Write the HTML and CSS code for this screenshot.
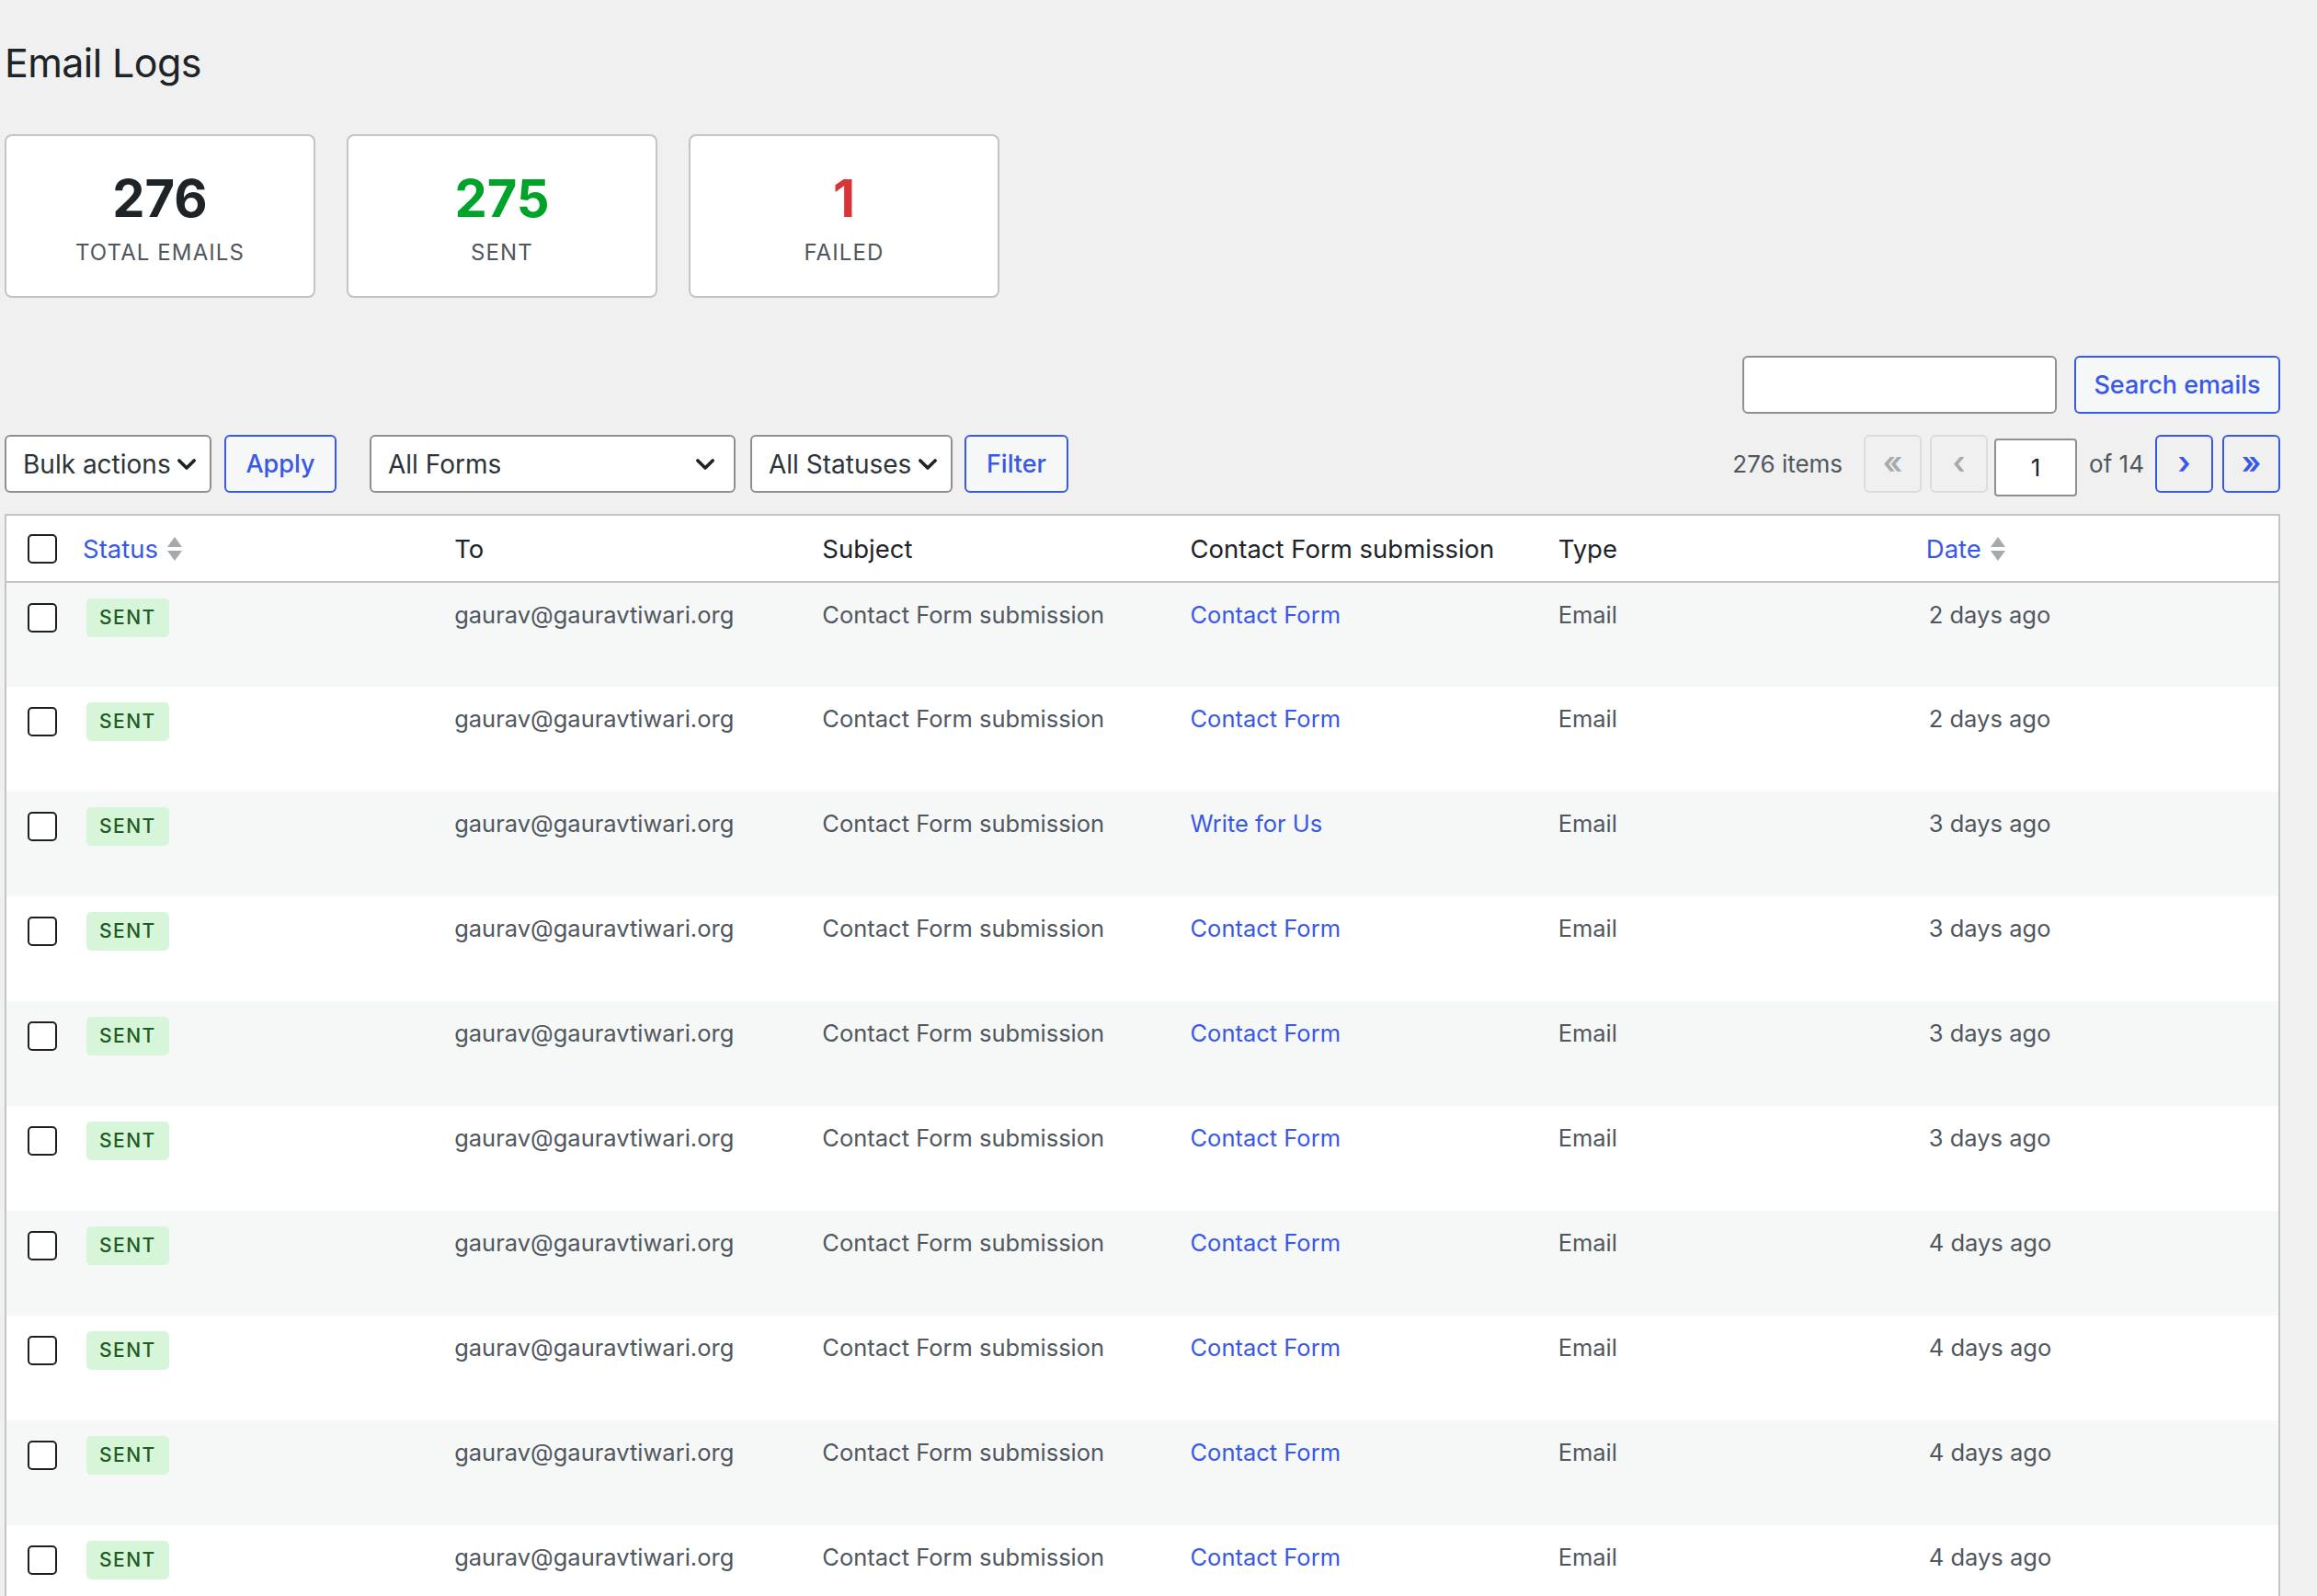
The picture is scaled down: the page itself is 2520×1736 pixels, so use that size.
FILE: index.html
```html
<!DOCTYPE html>
<html lang="en">

<head>
  <meta charset="UTF-8">
  <meta name="viewport" content="width=device-width, initial-scale=1.0">
  <title>Email Logs</title>
  <link rel="stylesheet" href="styles.css">
</head>

<body>
  <div class="wrap">
    <h1>Email Logs</h1>

    <section class="stats">
      <div class="stat">
        <span class="stat-number">276</span>
        <span class="stat-label">Total Emails</span>
      </div>
      <div class="stat">
        <span class="stat-number sent">275</span>
        <span class="stat-label">Sent</span>
      </div>
      <div class="stat">
        <span class="stat-number failed">1</span>
        <span class="stat-label">Failed</span>
      </div>
    </section>

    <form class="search-box">
      <input type="search" class="search-input" aria-label="Search emails">
      <button class="button search">Search emails</button>
    </form>

    <div class="tablenav">
      <div class="actions">
        <div class="select bulk">Bulk actions<svg viewBox="0 0 16 16"><path d="M3 5.5l5 5 5-5"/></svg></div>
        <button class="button apply">Apply</button>
        <div class="select forms">All Forms<svg viewBox="0 0 16 16"><path d="M3 5.5l5 5 5-5"/></svg></div>
        <div class="select statuses">All Statuses<svg viewBox="0 0 16 16"><path d="M3 5.5l5 5 5-5"/></svg></div>
        <button class="button filter">Filter</button>
      </div>
      <div class="pages">
        <span class="count">276 items</span>
        <span class="page-btn disabled first">«</span>
        <span class="page-btn disabled prev">‹</span>
        <input class="page-input" type="text" value="1" aria-label="Current page">
        <span class="of">of 14</span>
        <span class="page-btn next">›</span>
        <span class="page-btn last">»</span>
      </div>
    </div>

    <table class="logs">
      <colgroup>
        <col class="col-check">
        <col><col><col><col><col><col>
      </colgroup>
      <thead>
        <tr>
          <th class="check"><span class="checkbox"></span></th>
          <th class="status-head"><a href="#" class="sortable">Status<span class="sort"><i class="up"></i><i class="down"></i></span></a></th>
          <th>To</th>
          <th>Subject</th>
          <th>Contact Form submission</th>
          <th>Type</th>
          <th><a href="#" class="sortable">Date<span class="sort"><i class="up"></i><i class="down"></i></span></a></th>
        </tr>
      </thead>
      <tbody>
        <tr>
          <td class="check"><span class="checkbox"></span></td>
          <td><span class="badge">Sent</span></td>
          <td>gaurav@gauravtiwari.org</td>
          <td>Contact Form submission</td>
          <td><a href="#">Contact Form</a></td>
          <td>Email</td>
          <td class="date">2 days ago</td>
        </tr>
        <tr>
          <td class="check"><span class="checkbox"></span></td>
          <td><span class="badge">Sent</span></td>
          <td>gaurav@gauravtiwari.org</td>
          <td>Contact Form submission</td>
          <td><a href="#">Contact Form</a></td>
          <td>Email</td>
          <td class="date">2 days ago</td>
        </tr>
        <tr>
          <td class="check"><span class="checkbox"></span></td>
          <td><span class="badge">Sent</span></td>
          <td>gaurav@gauravtiwari.org</td>
          <td>Contact Form submission</td>
          <td><a href="#">Write for Us</a></td>
          <td>Email</td>
          <td class="date">3 days ago</td>
        </tr>
        <tr>
          <td class="check"><span class="checkbox"></span></td>
          <td><span class="badge">Sent</span></td>
          <td>gaurav@gauravtiwari.org</td>
          <td>Contact Form submission</td>
          <td><a href="#">Contact Form</a></td>
          <td>Email</td>
          <td class="date">3 days ago</td>
        </tr>
        <tr>
          <td class="check"><span class="checkbox"></span></td>
          <td><span class="badge">Sent</span></td>
          <td>gaurav@gauravtiwari.org</td>
          <td>Contact Form submission</td>
          <td><a href="#">Contact Form</a></td>
          <td>Email</td>
          <td class="date">3 days ago</td>
        </tr>
        <tr>
          <td class="check"><span class="checkbox"></span></td>
          <td><span class="badge">Sent</span></td>
          <td>gaurav@gauravtiwari.org</td>
          <td>Contact Form submission</td>
          <td><a href="#">Contact Form</a></td>
          <td>Email</td>
          <td class="date">3 days ago</td>
        </tr>
        <tr>
          <td class="check"><span class="checkbox"></span></td>
          <td><span class="badge">Sent</span></td>
          <td>gaurav@gauravtiwari.org</td>
          <td>Contact Form submission</td>
          <td><a href="#">Contact Form</a></td>
          <td>Email</td>
          <td class="date">4 days ago</td>
        </tr>
        <tr>
          <td class="check"><span class="checkbox"></span></td>
          <td><span class="badge">Sent</span></td>
          <td>gaurav@gauravtiwari.org</td>
          <td>Contact Form submission</td>
          <td><a href="#">Contact Form</a></td>
          <td>Email</td>
          <td class="date">4 days ago</td>
        </tr>
        <tr>
          <td class="check"><span class="checkbox"></span></td>
          <td><span class="badge">Sent</span></td>
          <td>gaurav@gauravtiwari.org</td>
          <td>Contact Form submission</td>
          <td><a href="#">Contact Form</a></td>
          <td>Email</td>
          <td class="date">4 days ago</td>
        </tr>
        <tr>
          <td class="check"><span class="checkbox"></span></td>
          <td><span class="badge">Sent</span></td>
          <td>gaurav@gauravtiwari.org</td>
          <td>Contact Form submission</td>
          <td><a href="#">Contact Form</a></td>
          <td>Email</td>
          <td class="date">4 days ago</td>
        </tr>
      </tbody>
    </table>
  </div>
</body>

</html>
```

FILE: styles.css
```css
body {
  margin: 0;
  font-family: Inter, "Noto Sans", sans-serif;
  font-size: 26px;
  background: #f0f0f1;
  color: #1d2327;
}

.wrap {
  padding: 0 40px 0 5px;
}

h1 {
  margin: 0;
  padding-top: 40px;
  font-size: 43px;
  font-weight: 400;
  line-height: 56px;
  letter-spacing: -0.6px;
}

a {
  color: #3858e9;
  text-decoration: none;
}

/* Stat cards */
.stats {
  display: flex;
  gap: 34px;
  margin-top: 50px;
}

.stat {
  box-sizing: border-box;
  width: 338px;
  height: 178px;
  display: flex;
  flex-direction: column;
  align-items: center;
  justify-content: center;
  gap: 12px;
  padding-top: 4px;
  background: #fff;
  border: 2px solid #c3c4c7;
  border-radius: 8px;
}

.stat-number {
  font-size: 56px;
  font-weight: 700;
  line-height: 64px;
}

.stat-number.sent {
  color: #00a32a;
}

.stat-number.failed {
  color: #d63638;
}

.stat-label {
  font-size: 24px;
  line-height: 30px;
  letter-spacing: 1.1px;
  text-transform: uppercase;
  color: #50575e;
}

/* Toolbar */
.search-box {
  display: flex;
  justify-content: flex-end;
  gap: 19px;
  margin-top: 63px;
}

.search-input {
  box-sizing: border-box;
  width: 342px;
  height: 63px;
  border: 2px solid #8c8f94;
  border-radius: 6px;
  background: #fff;
}

.button {
  box-sizing: border-box;
  height: 63px;
  padding: 0;
  font: inherit;
  font-size: 27px;
  font-weight: 500;
  color: #3858e9;
  background: #f6f7f7;
  border: 2px solid #3858e9;
  border-radius: 6px;
}

.search {
  width: 224px;
}

.tablenav {
  display: flex;
  justify-content: space-between;
  align-items: center;
  margin-top: 23px;
  height: 63px;
}

.actions,
.pages {
  display: flex;
  align-items: center;
}

.select {
  box-sizing: border-box;
  height: 63px;
  display: flex;
  align-items: center;
  justify-content: space-between;
  padding: 0 12px 0 18px;
  background: #fff;
  border: 2px solid #8c8f94;
  border-radius: 6px;
  color: #2c3338;
  font-size: 28px;
}

.select svg {
  width: 26px;
  height: 26px;
  fill: none;
  stroke: #1d2327;
  stroke-width: 2.2;
  stroke-linecap: round;
  stroke-linejoin: round;
}

.select.bulk {
  width: 225px;
}

.apply {
  width: 122px;
  margin-left: 14px;
}

.select.forms {
  width: 398px;
  margin-left: 36px;
  padding-right: 18px;
}

.select.statuses {
  width: 220px;
  margin-left: 16px;
}

.filter {
  width: 113px;
  margin-left: 13px;
}

.count {
  color: #50575e;
  margin-right: 23px;
}

.of {
  color: #50575e;
  margin: 0 12px 0 13px;
}

.page-btn {
  box-sizing: border-box;
  width: 63px;
  height: 63px;
  display: flex;
  align-items: center;
  justify-content: center;
  border: 2px solid #3858e9;
  border-radius: 6px;
  color: #3858e9;
  font-size: 34px;
  font-weight: 600;
  padding-bottom: 4px;
}

.page-btn.disabled {
  border-color: #dcdcde;
  color: #a7aaad;
}

.prev {
  margin-left: 9px;
}

.last {
  margin-left: 10px;
}

.page-input {
  box-sizing: border-box;
  width: 90px;
  height: 63px;
  margin-left: 7px;
  margin-top: 8px;
  font: inherit;
  text-align: center;
  color: #1d2327;
  background: #fff;
  border: 2px solid #8c8f94;
  border-radius: 4px;
}

/* Table */
.logs {
  width: 100%;
  margin-top: 23px;
  table-layout: fixed;
  border-collapse: collapse;
  background: #fff;
  border: 2px solid #c3c4c7;
}

.col-check {
  width: 72px;
}

th {
  height: 71px;
  padding: 0 16px;
  text-align: left;
  font-weight: 400;
  font-size: 27.5px;
  color: #1d2327;
  border-bottom: 2px solid #c3c4c7;
}

th.status-head {
  padding-left: 12px;
}

td {
  height: 114px;
  box-sizing: border-box;
  padding: 16px 16px;
  vertical-align: top;
  font-size: 25.5px;
  line-height: 38px;
  color: #50575e;
  white-space: nowrap;
}

tbody tr:nth-child(odd) {
  background: #f6f7f7;
}

.check {
  padding: 0 0 0 23px;
}

td.check {
  padding-top: 22px;
}

.checkbox {
  display: block;
  box-sizing: border-box;
  width: 32px;
  height: 32px;
  border: 2.5px solid #1e1e1e;
  border-radius: 5px;
  background: #fff;
}

.sortable {
  display: inline-flex;
  align-items: center;
  gap: 10px;
}

.sort {
  display: flex;
  flex-direction: column;
  gap: 4px;
}

.sort i {
  width: 0;
  height: 0;
  border-left: 8px solid transparent;
  border-right: 8px solid transparent;
}

.sort .up {
  border-bottom: 11px solid #a7aaad;
}

.sort .down {
  border-top: 11px solid #a7aaad;
}

.badge {
  display: inline-block;
  margin-top: 1px;
  padding: 2px 14px;
  font-size: 21px;
  font-weight: 500;
  letter-spacing: 1.5px;
  text-transform: uppercase;
  color: #1e5b24;
  background: #d7f5d8;
  border-radius: 5px;
}

.date {
  padding-left: 19px;
}
```
